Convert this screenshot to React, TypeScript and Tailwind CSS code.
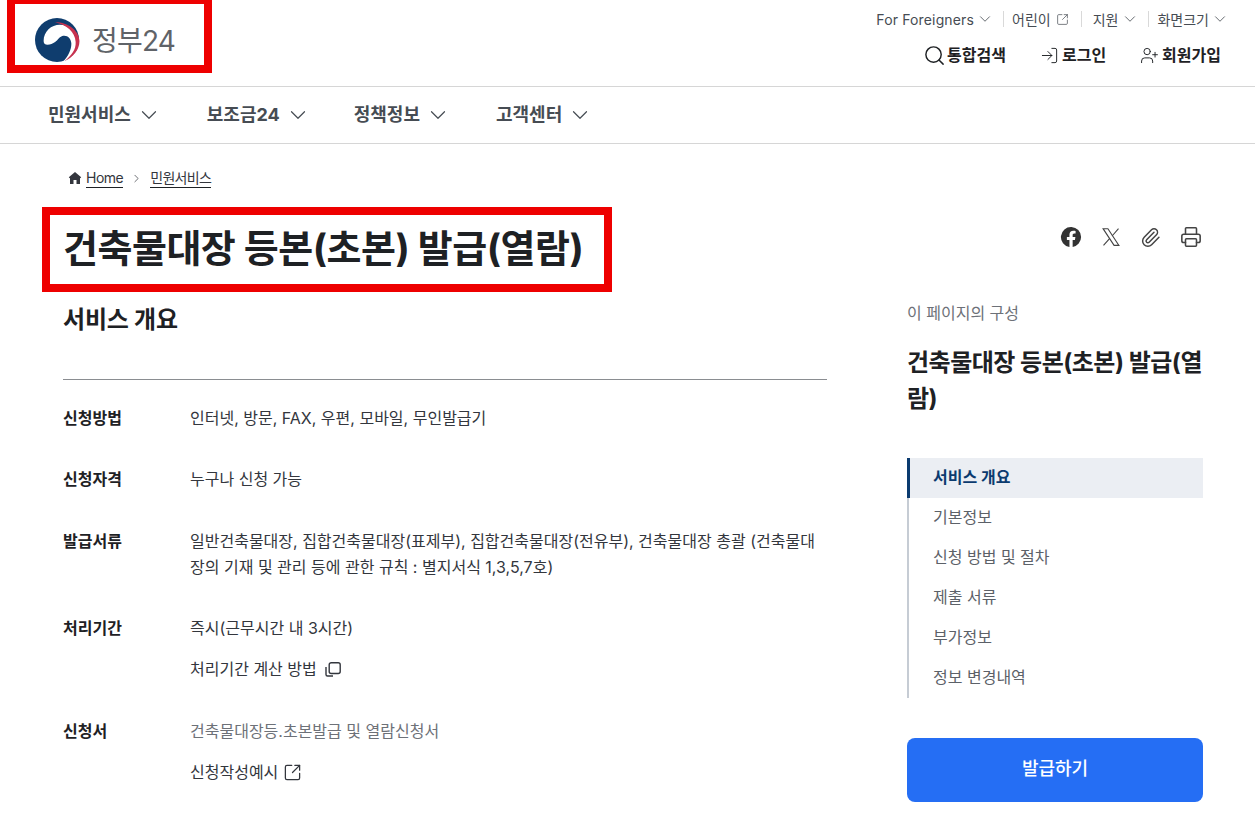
import { ChevronDown, ChevronRight, LogIn, Paperclip, Printer, Search, SquareArrowOutUpRight, UserPlus } from "lucide-react";
import type { ReactNode } from "react";

const font = { fontFamily: '"Inter", "Noto Sans CJK KR", sans-serif' };

function Logo() {
  return (
    <svg width="46" height="44" viewBox="0 0 48 46" className="shrink-0">
      <circle cx="24" cy="23" r="23" fill="#0f3d6e" />
      <path d="M10 24C10 14 18 7 27 7c9 0 18 7 20 17 0 9-6 17-15 21l-2 1c6-6 9-13 9-19 0-6-5-10-10-8-3 1-4 4-7 6-4 3-12 5-12-1Z" fill="#fff" />
      <path d="M22 4.500C36 4.500 47 13 47.500 24c0 9-6.500 17-15.500 21 7-6 12-12 11.500-20C43 15 34 7 22 4.500Z" fill="#c8324f" />
    </svg>
  );
}

function HomeIcon() {
  return (
    <svg width="14" height="14" viewBox="0 0 14 14" fill="#33363d" className="shrink-0">
      <path d="M7 1 .8 6.300l.9 1L2 7v6h3.500V9h3v4H12V7l.3.300.9-1L7 1Z" />
    </svg>
  );
}

function XIcon() {
  return (
    <svg width="20" height="20" viewBox="0 0 24 24" fill="none" stroke="#444" strokeWidth="1.300">
      <path d="M2.500 2h5.800l13.200 20h-5.800L2.500 2Z" />
      <path d="M21 2 13.300 10.800M10.500 13.600 3 22" />
    </svg>
  );
}

function FacebookIcon() {
  return (
    <svg width="22" height="22" viewBox="0 0 24 24" fill="#333">
      <path d="M23 12a11 11 0 1 0-12.700 10.900v-7.700H7.500V12h2.800V9.600c0-2.800 1.600-4.300 4.200-4.300 1.200 0 2.500.2 2.500.2v2.700h-1.400c-1.400 0-1.800.9-1.800 1.700V12h3l-.5 3.200h-2.500v7.700A11 11 0 0 0 23 12Z" />
    </svg>
  );
}

function CopyIcon() {
  return (
    <svg width="16" height="16" viewBox="0 0 16 16" fill="none" stroke="#33363d" strokeWidth="1.400" className="ml-[8px]">
      <rect x="4.200" y="1.700" width="11" height="10.800" rx="2" />
      <path d="M1 6v7.500Q1 15 2.500 15H8" />
    </svg>
  );
}

function Row({ label, mt, children }: { label: string; mt: string; children: ReactNode }) {
  return (
    <div className={`flex ${mt}`}>
      <div className="w-[127px] shrink-0 text-[16px] leading-[26px] font-bold text-[#1e2124]">{label}</div>
      <div className="flex-1 text-[16px] leading-[26px] text-[#33363d]">{children}</div>
    </div>
  );
}

const tocItems = ["기본정보", "신청 방법 및 절차", "제출 서류", "부가정보", "정보 변경내역"];

function NavItem({ label, ml }: { label: string; ml: string }) {
  return (
    <>
      <span className={ml}>{label}</span>
      <ChevronDown size={26} strokeWidth={1.100} className="ml-[5px]" />
    </>
  );
}

export default function App() {
  return (
    <div style={font} className="relative h-[820px] w-[1255px] overflow-hidden bg-white">
      <header className="flex h-[87px] justify-between border-b border-[#d6d6d6]">
        <div className="flex items-start pt-[18px] pl-[34px]">
          <Logo />
          <span className="ml-[12px] mt-[3px] text-[28px] leading-[40px] tracking-[-0.800px] text-[#5f6368]">정부24</span>
        </div>
        <div className="flex flex-col items-end pr-[26px]">
          <div className="mt-[10px] flex h-[18px] items-center text-[14px] text-[#464c53]">
            <span className="tracking-[0.150px]">For Foreigners</span>
            <ChevronDown size={18} strokeWidth={1.100} className="ml-[2px]" />
            <span className="ml-[9px] mr-[8px] h-[16px] w-px bg-[#d9d9d9]" />
            <span>어린이</span>
            <SquareArrowOutUpRight size={13} strokeWidth={1.300} className="ml-[5px]" />
            <span className="ml-[12px] mr-[11px] h-[16px] w-px bg-[#d9d9d9]" />
            <span>지원</span>
            <ChevronDown size={18} strokeWidth={1.100} className="ml-[3px]" />
            <span className="ml-[9px] mr-[8px] h-[16px] w-px bg-[#d9d9d9]" />
            <span>화면크기</span>
            <ChevronDown size={18} strokeWidth={1.100} className="ml-[2px]" />
          </div>
          <div className="mt-[15px] flex items-center pr-[8px] text-[16px] leading-[24px] font-bold text-[#1e2124]">
            <Search size={23} strokeWidth={1.500} />
            <span className="ml-[1px]">통합검색</span>
            <LogIn size={19} strokeWidth={1.200} className="ml-[34px]" />
            <span className="ml-[3px]">로그인</span>
            <UserPlus size={19} strokeWidth={1.200} className="ml-[34px]" />
            <span className="ml-[3px]">회원가입</span>
          </div>
        </div>
      </header>

      <nav className="flex h-[57px] items-center border-b border-[#d6d6d6] pb-[1px] pl-[48px] text-[18px] font-bold text-[#464c53]">
        <NavItem label="민원서비스" ml="ml-0" />
        <NavItem label="보조금24" ml="ml-[45px]" />
        <NavItem label="정책정보" ml="ml-[43px]" />
        <NavItem label="고객센터" ml="ml-[45px]" />
      </nav>

      <div className="mt-[24px] flex h-[20px] items-center pl-[68px] text-[14px] tracking-[-0.500px] text-[#33363d]">
        <HomeIcon />
        <span className="ml-[4px] border-b border-[#1e2124] leading-[18px]">Home</span>
        <ChevronRight size={13} strokeWidth={1.300} className="mx-[7px]" />
        <span className="border-b border-[#1e2124] leading-[18px] tracking-[-0.700px]">민원서비스</span>
      </div>

      <div className="mt-[37px] flex justify-between pl-[63px] pr-[53px]">
        <h1 className="text-[38px] leading-[46px] font-bold tracking-[-0.500px] text-[#1e2124]">건축물대장 등본(초본) 발급(열람)</h1>
        <div className="mt-[1px] flex h-[22px] items-center gap-[19px] text-[#444]">
          <FacebookIcon />
          <XIcon />
          <Paperclip size={21} strokeWidth={1.700} />
          <Printer size={22} strokeWidth={1.700} />
        </div>
      </div>

      <div className="flex pl-[63px]">
        <main className="w-[764px] shrink-0">
          <h2 className="mt-[31px] text-[24px] leading-[36px] font-bold tracking-[-0.200px] text-[#1e2124]">서비스 개요</h2>
          <div className="mt-[41px] border-t border-[#8a8d91]" />
          <Row label="신청방법" mt="mt-[25px]">인터넷, 방문, FAX, 우편, 모바일, 무인발급기</Row>
          <Row label="신청자격" mt="mt-[35px]">누구나 신청 가능</Row>
          <Row label="발급서류" mt="mt-[36px]">
            일반건축물대장, 집합건축물대장(표제부), 집합건축물대장(전유부), 건축물대장 총괄 (건축물대
            <br />
            장의 기재 및 관리 등에 관한 규칙 : 별지서식 1,3,5,7호)
          </Row>
          <Row label="처리기간" mt="mt-[35px]">
            <div>즉시(근무시간 내 3시간)</div>
            <div className="mt-[15px] flex items-center">
              처리기간 계산 방법
              <CopyIcon />
            </div>
          </Row>
          <Row label="신청서" mt="mt-[36px]">
            <div className="text-[#6d7178]">건축물대장등.초본발급 및 열람신청서</div>
            <div className="mt-[15px] flex items-center">
              신청작성예시
              <SquareArrowOutUpRight size={19} strokeWidth={1.600} className="ml-[5px]" />
            </div>
          </Row>
        </main>

        <aside className="ml-[80px] w-[296px] shrink-0">
          <div className="mt-[30px] text-[16px] leading-[24px] text-[#6d7178]">이 페이지의 구성</div>
          <div className="mt-[20px] text-[24px] leading-[36px] font-bold tracking-[-0.500px] whitespace-nowrap text-[#1e2124]">
            건축물대장 등본(초본) 발급(열
            <br />
            람)
          </div>
          <div className="mt-[41px] border-l-2 border-[#c6ccd4]">
            <div className="-ml-[2px] flex h-[40px] items-center border-l-[3px] border-[#0b3b6f] bg-[#ebeef3] pb-[2px] pl-[23px] text-[16px] font-bold text-[#0b3b6f]">서비스 개요</div>
            {tocItems.map((t) => (
              <div key={t} className="flex h-[40px] items-center pb-[2px] pl-[24px] text-[16px] text-[#5c6168]">{t}</div>
            ))}
          </div>
          <div className="mt-[40px] flex h-[64px] items-center justify-center rounded-[8px] bg-[#256ef4] pb-[3px] text-[18px] font-medium text-white">발급하기</div>
        </aside>
      </div>

      <div className="absolute left-[7px] top-0 h-[73px] w-[205px] border-8 border-t-4 border-[#ee0000]" />
      <div className="absolute left-[42px] top-[207px] h-[85px] w-[570px] border-8 border-[#ee0000]" />
    </div>
  );
}
